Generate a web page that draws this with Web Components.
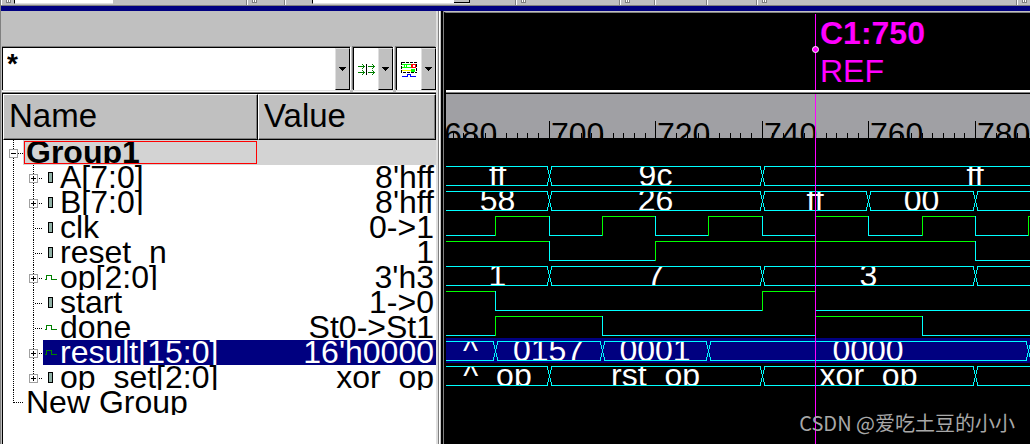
<!DOCTYPE html>
<html lang="en">
<head>
<meta charset="utf-8">
<title>Waveform viewer</title>
<style>
  html, body { margin: 0; height: 100%; }
  body { background: #c0c0c0; font: 32px "Liberation Sans", Arial, sans-serif; color: #000; overflow: hidden; }
</style>
</head>
<body>
<wave-app></wave-app>

<script>
const define = (name, html, setup) => {
  const template = document.createElement('template');
  template.innerHTML = html;
  customElements.define(name, class extends HTMLElement {
    connectedCallback() {
      if (this.shadowRoot) return;
      const root = this.attachShadow({ mode: 'open' });
      root.append(template.content.cloneNode(true));
      if (setup) setup(this, root);
    }
  });
};

// Horizontal position, inside the wave pane, of a simulation time.
const X = t => Math.floor(103.15 + (t - 700) * 5.327);
const START = 680, END = 1100;
const rect = (x, y, w, h, fill) => `<rect x="${x}" y="${y}" width="${w}" height="${h}" fill="${fill}"/>`;
const CYAN = '#00ffff', GREEN = '#00ff00';

define('tool-band', `
<style>
  :host { display: block; flex: none; box-sizing: border-box; width: var(--w, 40px); height: 5px; border-right: 1px solid #808080; border-left: 1px solid #fff; overflow: hidden; }
  div { display: flex; padding-left: 4px; }
  svg { display: none; flex: none; }
  :host([grip]) svg { display: block; }
</style>
<div><svg width="8" height="4" shape-rendering="crispEdges"><path d="M0 0h1v2h1V0h1v2h1V0h1v3H0z" fill="#808080"/><path d="M1 0h1v2H1zM3 0h1v2H3z" fill="#fff"/></svg><slot></slot></div>`);

define('tool-field', `
<style>
  :host { display: flex; width: var(--w, 100px); height: 4px; box-sizing: border-box; background: #fff; border-left: 1px solid #000; border-bottom: 1px solid #dfdfdf; }
  i { display: none; margin-left: auto; width: 15px; background: #c0c0c0; border-right: 1px solid #000; border-bottom: 1px solid #000; }
  :host([drop]) i { display: block; }
</style><i></i>`);

define('app-toolbar', `
<style>
  :host { display: flex; height: 5px; overflow: hidden; background: #c0c0c0; border-bottom: 1px solid #808080; }
</style>
<tool-band grip style="--w:246px"><tool-field style="--w:99px"></tool-field></tool-band>
<tool-band grip style="--w:38px"></tool-band>
<tool-band style="--w:231px"><tool-field drop style="--w:158px; margin-left:22px"></tool-field></tool-band>
<tool-band grip style="--w:104px"></tool-band>
<tool-band grip style="--w:35px"></tool-band>
<tool-band style="--w:52px"></tool-band>
<tool-band style="--w:50px"></tool-band>
<tool-band grip style="--w:260px"></tool-band>
<tool-band grip style="--w:260px"></tool-band>`);

define('drop-arrow', `
<style>
  :host { display: flex; flex: none; align-items: center; justify-content: center; box-sizing: border-box; width: 15px; height: 42px; background: #c0c0c0; border: 1px solid #000; border-top-color: #dfdfdf; border-left-color: #dfdfdf; }
  svg { margin-right: 1px; }
</style>
<svg width="7" height="4" shape-rendering="crispEdges"><path d="M0 0h7v1H0zM1 1h5v1H1zM2 2h3v1H2zM3 3h1v1H3z"/></svg>`);

define('filter-box', `
<style>
  :host { display: flex; flex: 1; min-width: 0; }
  .box { display: flex; flex: 1; min-width: 0; height: 42px; background: #fff; border-top: 1px solid #000; border-left: 1px solid #000; box-shadow: 0 -1px #808080, 0 1px #dfdfdf, 0 2px #fff, 1px 0 #fff; }
  input { flex: 1; min-width: 0; border: 0; outline: 0; padding: 0 0 10px 4px; background: transparent; color: #000; font: bold 28px "Liberation Sans", Arial, sans-serif; }
  button { border: 0; padding: 0; background: none; display: flex; }
</style>
<div class="box"><input type="text" value="*" aria-label="Signal filter"><button type="button" aria-label="Filter history"><drop-arrow></drop-arrow></button></div>`);

define('icon-drop', `
<style>
  :host { display: block; flex: none; }
  button { display: flex; align-items: center; box-sizing: border-box; width: 40px; height: 43px; padding: 0; background: #fff; border: 0; border-top: 1px solid #000; border-left: 1px solid #000; box-shadow: -1px -1px #808080, 0 1px #dfdfdf, 0 2px #fff, 1px 0 #fff; }
  span { flex: 1; display: flex; justify-content: center; }
</style>
<button type="button"><span><slot></slot></span><drop-arrow></drop-arrow></button>`,
(host, root) => root.querySelector('button').setAttribute('aria-label', host.getAttribute('label')));

const SIGNALS = [
  { name: 'A[7:0]', value: "8'hff", icon: 'port', bus: true },
  { name: 'B[7:0]', value: "8'hff", icon: 'port', bus: true },
  { name: 'clk', value: '0->1', icon: 'port' },
  { name: 'reset_n', value: '1', icon: 'port' },
  { name: 'op[2:0]', value: "3'h3", icon: 'net', bus: true },
  { name: 'start', value: '1->0', icon: 'port' },
  { name: 'done', value: 'St0->St1', icon: 'net' },
  { name: 'result[15:0]', value: "16'h0000", icon: 'net', bus: true, selected: true },
  { name: 'op_set[2:0]', value: 'xor_op', icon: 'port', bus: true, last: true }
];

const dots = d => `<path d="${d}" stroke="#000" stroke-dasharray="1 1"/>`;
const box = (x, open) => rect(x - 4, 9, 9, 9, '#a0a0a0') + rect(x - 3, 10, 7, 7, '#fff')
  + rect(x - 2, 13, 5, 1, '#000') + (open ? '' : rect(x, 11, 1, 5, '#000'));
const glyph = {
  port: rect(45, 7, 5, 11, '#000') + rect(46, 8, 3, 9, '#8fb0a5'),
  net: rect(42, 14, 2, 1, '#008000') + rect(43, 10, 1, 4, '#008000') + rect(43, 10, 6, 1, '#008000')
    + rect(48, 10, 1, 5, '#008000') + rect(48, 14, 6, 1, '#008000')
};

define('signal-table', `
<style>
  :host { display: block; background: #fff; flex: 1; border-top: 1px solid #000; border-left: 1px solid #000; }
  table { width: 100%; table-layout: fixed; border-collapse: separate; border-spacing: 0; }
  col.name { width: 255px; }
  th { height: 46px; box-sizing: border-box; padding: 0 0 2px 5px; text-align: left; font-size: 33px; font-weight: normal; line-height: 36px; background: #c0c0c0; border: 1px solid; border-color: #fff #000 #000 #fff; box-shadow: inset -1px -1px #808080; }
  td { padding: 0; height: 25px; }
  .cell { display: flex; height: 25px; line-height: 24px; overflow: hidden; white-space: nowrap; }
  svg { flex: none; }
  .value { justify-content: flex-end; padding-right: 2px; }
  .group .value, .group b { background: #d3d3d3; }
  .group b { flex: 1; height: 21px; line-height: 21px; overflow: hidden; border: 1px solid #f00; margin: 1px 1px 0 0; padding-left: 1px; box-shadow: 0 0 0 1px #d3d3d3; }
  .selected .value, .selected .name span { background: #000080; color: #fff; }
  .name span { flex: 1; }
</style>
<table>
  <colgroup><col class="name"><col></colgroup>
  <thead><tr><th scope="col">Name</th><th scope="col">Value</th></tr></thead>
  <tbody></tbody>
</table>`,
(host, root) => {
  const svg = (w, body) => `<svg width="${w}" height="25" shape-rendering="crispEdges" aria-hidden="true">${body}</svg>`;
  const esc = s => s.replace('>', '&gt;');
  let rows = `<tr class="group"><td><div class="cell name">${svg(21, dots('M10.500 0v25M15 13.500h5') + box(10, true))}<b>Group1</b></div></td><td><div class="cell value"></div></td></tr>`;
  for (const s of SIGNALS) {
    const art = (s.selected ? rect(40, 0, 17, 25, '#000080') : '')
      + dots(`M10.500 0v25M30.500 0v${s.last ? 10 : 25}M${s.bus ? 36 : 32} 13.500h${s.bus ? 3 : 7}`)
      + (s.bus ? box(30) : '') + glyph[s.icon];
    rows += `<tr class="${s.selected ? 'selected' : ''}"><td><div class="cell name">${svg(57, art)}<span>${s.name}</span></div></td><td><div class="cell value">${esc(s.value)}</div></td></tr>`;
  }
  rows += `<tr><td><div class="cell name">${svg(23, dots('M10.500 0v13M11 12.500h9'))}<span>New Group</span></div></td><td></td></tr>`;
  root.querySelector('tbody').innerHTML = rows;
});

define('signal-pane', `
<style>
  :host { display: flex; flex-direction: column; box-sizing: border-box; border-right: 2px solid #dfdfdf; }
  .filters { display: flex; gap: 3px; padding: 36px 0 2px; border-bottom: 1px solid #808080; }
</style>
<div class="filters">
  <filter-box></filter-box>
  <icon-drop label="Signal direction">
    <svg width="17" height="11" shape-rendering="crispEdges"><g fill="#008000"><path d="M0 2h7v1H0zM4 0h1v1H4zM5 1h1v1H5zM5 3h1v1H5zM4 4h1v1H4z"/><path d="M0 8h7v1H0zM4 6h1v1H4zM5 7h1v1H5zM5 9h1v1H5zM4 10h1v1H4z"/><path d="M10 2h7v1h-7zM14 0h1v1h-1zM15 1h1v1h-1zM15 3h1v1h-1zM14 4h1v1h-1z"/><path d="M10 8h7v1h-7zM14 6h1v1h-1zM15 7h1v1h-1zM15 9h1v1h-1zM14 10h1v1h-1z"/></g><path d="M8 0h1v11H8z"/></svg>
  </icon-drop>
  <icon-drop label="Signal type">
    <svg width="16" height="15" shape-rendering="crispEdges"><path d="M1 2h9v4H1z" fill="#0f0"/><path d="M1 3h2v2H1zM4 3h1v2H4zM6 3h4v2H6z" fill="#fff"/><path d="M10 2h5v4h-5z" fill="#f00"/><path d="M12 3h2v2h-2z" fill="#fff"/><path d="M1 8h9v1H1z" fill="#ff0"/><path d="M10 7h4v3h-4z" fill="#0f0"/><path d="M.5 .5h15v10H.5z" fill="none" stroke="#000" stroke-dasharray="3 1"/><path d="M1 14h6v1H1zM6 12h4v1H6zM6 12h1v3H6zM9 12h1v3H9zM9 14h6v1H9z" fill="#00f"/></svg>
  </icon-drop>
</div>
<signal-table></signal-table>`);

define('time-ruler', `
<style>
  :host { display: block; position: relative; height: 44px; overflow: hidden; background: #a0a0a4; }
  .labels { display: flex; padding-top: 27px; margin-left: -4px; }
  .labels span { flex: none; box-sizing: border-box; height: 17px; line-height: 26px; border-left: 1px solid #000; padding-left: 1px; }
  svg { position: absolute; left: 0; bottom: 0; width: 100%; height: 5px; }
</style>
<div class="labels"></div>
<svg shape-rendering="crispEdges" aria-hidden="true"></svg>`,
(host, root) => {
  let labels = '', ticks = '';
  for (let t = START; t < END; t += 20) labels += `<span style="width:${X(t + 20) - X(t)}px">${t}</span>`;
  for (let t = START; t < END; t += 2) ticks += rect(X(t), 0, 1, 5, '#000');
  root.querySelector('.labels').innerHTML = labels;
  root.querySelector('svg').innerHTML = ticks;
});

define('bit-trace', `
<style>
  :host { display: block; height: 25px; overflow: hidden; }
  svg { display: block; width: 100%; height: 25px; }
</style>
<svg shape-rendering="crispEdges" aria-hidden="true"></svg>`,
(host, root) => {
  let level = host.getAttribute('initial') === '1', from = 0, art = '';
  const run = to => { art += rect(from, level ? 3 : 22, to - from + 1, 1, level ? GREEN : CYAN); };
  for (const t of host.getAttribute('edges').split(' ')) {
    const x = X(+t);
    run(x);
    level = !level;
    art += rect(x, 3, 1, 20, level ? GREEN : CYAN);
    from = x;
  }
  run(X(END));
  root.querySelector('svg').innerHTML = art;
});

define('bus-trace', `
<style>
  :host { display: grid; height: 25px; overflow: hidden; color: #fff; }
  :host([selected]) { background: #000080; }
  svg, .values { grid-area: 1 / 1; }
  svg { width: 100%; height: 25px; }
  .values { display: flex; min-width: 0; margin-top: 4px; height: 18px; line-height: 16px; overflow: hidden; }
  .values span { flex: none; text-align: center; white-space: nowrap; }
</style>
<svg shape-rendering="crispEdges" aria-hidden="true"></svg><div class="values"></div>`,
(host, root) => {
  const parts = host.getAttribute('values').split(' ').map(p => p.split('@'));
  let from = 0, art = '', values = '';
  parts.forEach(([text, end]) => {
    const x = X(+end), left = from ? from + 2 : 0;
    art += rect(left, 3, x - 1 - left, 1, CYAN) + rect(left, 22, x - 1 - left, 1, CYAN);
    // The two sides of a value change lean towards each other at mid height.
    [[3, 4, 2], [7, 4, 1], [11, 4, 0], [15, 4, 1], [19, 4, 2]].forEach(([y, h, d]) => {
      art += rect(x - d, y, 1, h, CYAN) + rect(x + d, y, 1, h, CYAN);
    });
    values += `<span style="width:${x - from}px">${text}</span>`;
    from = x;
  });
  root.querySelector('svg').innerHTML = art;
  root.querySelector('.values').innerHTML = values;
});

define('cursor-flag', `
<style>
  :host { display: block; position: relative; height: 77px; overflow: hidden; background: #000; color: #f0f; line-height: 38px; }
  .text { padding: 1px 0 0 374px; }
  strong, span { display: block; }
  i { position: absolute; top: 1px; bottom: 0; left: 369px; width: 1px; background: #f0f; }
  svg { position: absolute; left: 366px; top: 33px; }
</style>
<div class="text"><strong>C1:750</strong><span>REF</span></div>
<i></i>
<svg width="7" height="7"><circle cx="3.500" cy="3.500" r="3" fill="#f0f" stroke="#fff"/></svg>`);

define('wave-pane', `
<style>
  :host { display: flex; flex-direction: column; min-width: 0; box-sizing: border-box; border-left: 1px solid #000; border-top: 1px solid #808080; background: #000; }
  .rail { height: 4px; box-sizing: border-box; border-top: 2px solid #fff; border-bottom: 1px solid #000; background: #808080; }
  .plot { position: relative; flex: 1; overflow: hidden; }
  .traces { padding-top: 25px; }
  .cursor { position: absolute; top: 0; bottom: 0; left: 369px; width: 1px; background: #f0f; }
  .mark { position: absolute; right: 15px; bottom: 6px; font: 20px/28px "Liberation Sans", "Noto Sans CJK SC", sans-serif; color: #a8a8a8; }
</style>
<cursor-flag></cursor-flag>
<div class="rail"></div>
<div class="plot">
  <time-ruler></time-ruler>
  <div class="traces">
    <bus-trace values="ff@700 9c@740 ff@820"></bus-trace>
    <bus-trace values="58@700 26@740 ff@760 00@780 @1100"></bus-trace>
    <bit-trace initial="0" edges="690 700 710 720 730 740 750 760 770 780 790 800"></bit-trace>
    <bit-trace initial="1" edges="700 720 780"></bit-trace>
    <bus-trace values="1@700 7@740 3@780 @1100"></bus-trace>
    <bit-trace initial="1" edges="690 740 750"></bit-trace>
    <bit-trace initial="0" edges="690 710 750 770"></bit-trace>
    <bus-trace selected values="^@690 0157@710 0001@730 0000@790 @1100"></bus-trace>
    <bus-trace values="^_op@700 rst_op@740 xor_op@780 @1100"></bus-trace>
  </div>
  <div class="cursor"></div>
  <div class="mark" lang="zh-CN"><span style="font-family:'Noto Sans CJK SC',sans-serif">CSDN @爱吃土豆的小小</span></div>
</div>`);

define('wave-app', `
<style>
  :host { display: flex; flex-direction: column; height: 100%; box-sizing: border-box; border-left: 1px solid #808080; background: #c0c0c0; }
  .title { height: 5px; background: #000080; }
  .panes { flex: 1; min-height: 0; display: grid; grid-template-columns: 436px 6px minmax(0, 1fr); padding-left: 1px; }
  .split { box-sizing: border-box; border-left: 1px solid #808080; border-right: 1px solid #808080; box-shadow: inset 1px 0 #fff, inset -2px 0 #000; }
  wave-pane { margin-top: 1px; border-left-width: 2px; }
</style>
<app-toolbar></app-toolbar>
<div class="title"></div>
<div class="panes"><signal-pane></signal-pane><div class="split"></div><wave-pane></wave-pane></div>`);
</script>
</body>
</html>
